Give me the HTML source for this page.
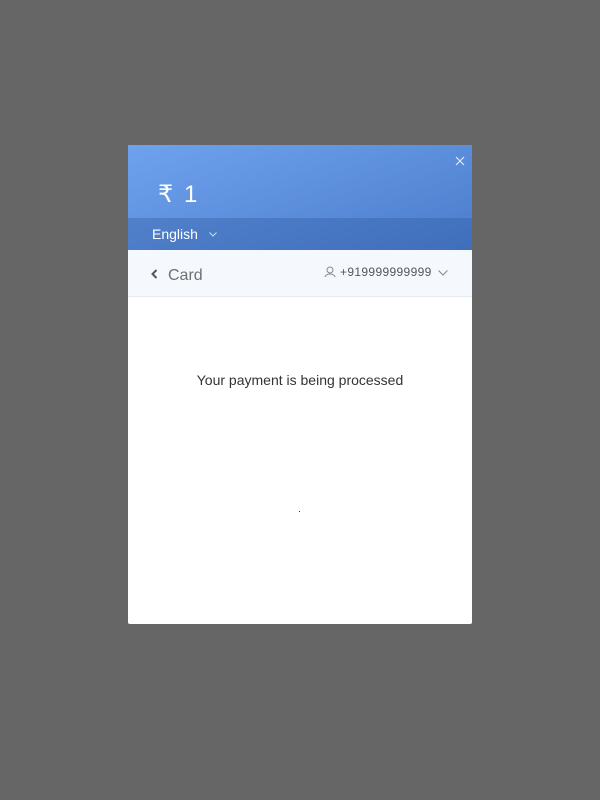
<!DOCTYPE html>
<html><head><meta charset="utf-8"><style>
body{margin:0;width:600px;height:800px;background:#666;font-family:"Liberation Sans",sans-serif;position:relative;overflow:hidden}
.m{position:absolute;left:128px;top:145px;width:344px;height:479px;background:#fff;border-radius:2px;overflow:hidden}
.h{position:absolute;left:0;top:0;width:344px;height:105px;background:linear-gradient(160deg,#6fa2ee,#4a7ccb)}
.amt{position:absolute;left:30px;top:35px;color:#fff;font-size:24px;word-spacing:4px}
.lang{position:absolute;left:0;top:73px;width:344px;height:32px;background:rgba(40,80,150,.3);color:#fff;font-size:14px}
.lang span{position:absolute;left:24px;top:8px}
.bar{position:absolute;left:0;top:105px;width:344px;height:46px;background:#f5f8fd;border-bottom:1px solid #e6e9ee}
.card{position:absolute;left:40px;top:17px;font-size:16px;color:#707070}
.ph{position:absolute;left:212px;top:15px;font-size:12px;color:#555;letter-spacing:.35px}
.msg{position:absolute;left:0;top:227px;width:344px;text-align:center;font-size:14px;color:#333}
</style></head><body>
<div class="m">
<div class="h"><div class="amt">₹ 1</div>
<svg style="position:absolute;left:327px;top:11px" width="10" height="10"><path d="M1 1L9 9M9 1L1 9" stroke="#dfe9fa" stroke-width="1.2"/></svg>
<div class="lang"><span>English</span>
<svg style="position:absolute;left:81px;top:14px" width="8" height="5"><path d="M0.5 0.5L4 4L7.5 0.5" stroke="#cfdcf3" fill="none"/></svg></div></div>
<div class="bar">
<svg style="position:absolute;left:23px;top:19px" width="7" height="10"><path d="M5.5 1L1.5 5L5.5 9" stroke="#555" stroke-width="2" fill="none"/></svg>
<div class="card">Card</div>
<svg style="position:absolute;left:196px;top:16px" width="12" height="12"><circle cx="6" cy="4" r="3" stroke="#888" fill="none"/><path d="M1 11C2 7 10 7 11 11" stroke="#888" fill="none"/></svg>
<div class="ph">+919999999999</div>
<svg style="position:absolute;left:310px;top:20px" width="10" height="6"><path d="M0.5 0.5L5 5L9.5 0.5" stroke="#888" fill="none"/></svg>
</div>
<div class="msg">Your payment is being processed</div>
<div style="position:absolute;left:171px;top:366px;width:1px;height:1px;background:#333"></div>
</div>
</body></html>
